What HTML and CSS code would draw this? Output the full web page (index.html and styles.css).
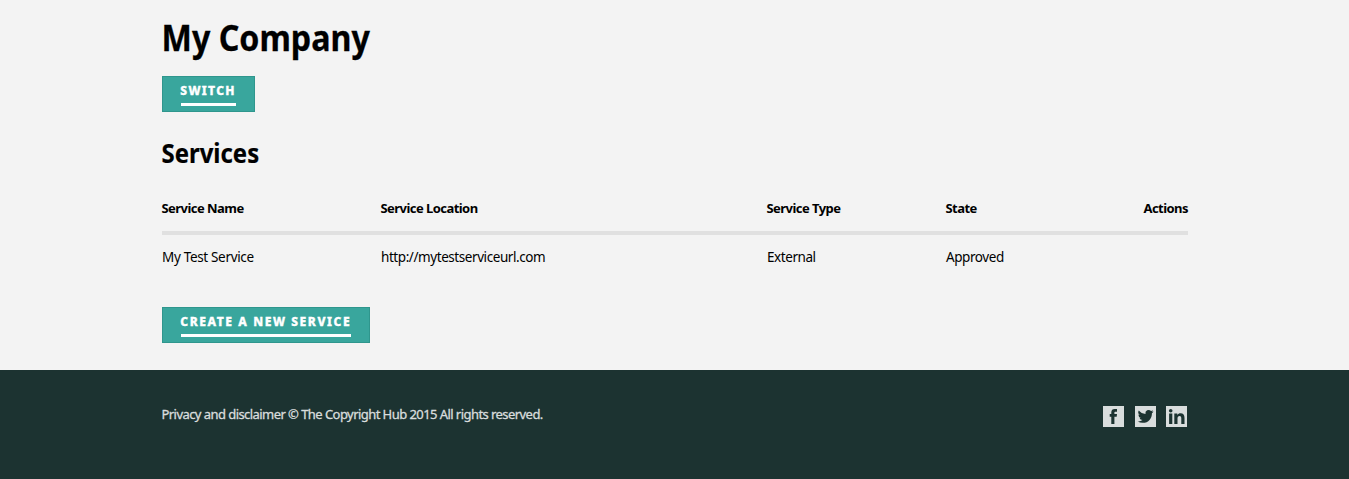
FILE: index.html
```html
<!DOCTYPE html>
<html lang="en">
<head>
<meta charset="utf-8">
<title>My Company</title>
<link rel="stylesheet" href="styles.css">
</head>
<body>
<main class="content">
  <div class="wrap">
    <h1 class="title">My Company</h1>
    <a class="button button-switch"><span class="button-label">Switch</span></a>
    <h2 class="subtitle">Services</h2>
    <div class="table">
      <div class="row head">
        <span>Service Name</span><span>Service Location</span><span>Service Type</span><span>State</span><span class="actions">Actions</span>
      </div>
      <div class="row body">
        <span class="name">My Test Service</span><span>http://mytestserviceurl.com</span><span>External</span><span>Approved</span><span></span>
      </div>
    </div>
    <a class="button button-create"><span class="button-label">Create a new service</span></a>
  </div>
</main>
<footer class="footer">
  <div class="wrap footer-row">
    <p class="legal">Privacy and disclaimer © The Copyright Hub 2015 All rights reserved.</p>
    <div class="social">
      <svg class="icon" viewBox="0 0 21 21"><rect width="21" height="21" fill="#d9dddd"/><path fill="#1c3331" d="M8.300 18V10.800H6.700V8.100h1.600V6.400C8.300 4.100 9.500 3 11.700 3H14v2.800h-1.400c-.9 0-1.200.3-1.200 1.100v1.200H14l-.3 2.700h-2.300V18z"/></svg>
      <svg class="icon" viewBox="0 0 21 21"><rect width="21" height="21" fill="#d9dddd"/><path fill="#1c3331" transform="translate(2.700 2.500) scale(.66)" d="M23.950 4.570a10 10 0 0 1-2.820.77 4.960 4.960 0 0 0 2.160-2.720c-.95.550-2 .950-3.130 1.180a4.920 4.920 0 0 0-8.380 4.480C7.690 8.090 4.070 6.130 1.640 3.160a4.920 4.920 0 0 0 1.520 6.570 4.900 4.900 0 0 1-2.230-.61v.06a4.920 4.920 0 0 0 3.950 4.830 5 5 0 0 1-2.210.08 4.940 4.940 0 0 0 4.600 3.420A9.870 9.870 0 0 1 0 19.540a14 14 0 0 0 7.550 2.210c9.050 0 14-7.500 14-13.980l-.02-.630a9.940 9.940 0 0 0 2.420-2.570z"/></svg>
      <svg class="icon" viewBox="0 0 21 21"><rect width="21" height="21" fill="#d9dddd"/><circle cx="4.700" cy="4.700" r="1.800" fill="#1c3331"/><path fill="#1c3331" d="M3.100 7.500h3.200V18H3.100zM8.300 7.500h3v1.400c.7-1.100 1.800-1.700 3.200-1.700 2.900 0 4 1.700 4 4.700V18h-3.200v-5.500c0-1.700-.4-2.600-1.700-2.600-1.500 0-2.100 1-2.100 2.600V18H8.300z"/></svg>
    </div>
  </div>
</footer>
</body>
</html>
```
FILE: styles.css
```css
* { box-sizing: border-box; }
body {
  margin: 0;
  background: #f3f3f3;
  color: #000;
  font: 13.5px/20px "Noto Sans", sans-serif;
}
.wrap { width: 1026px; margin-left: 162px; }
.content { height: 370px; overflow: hidden; }
.title,
.subtitle {
  width: fit-content;
  text-indent: -.5px;
  transform: scaleX(.92);
  transform-origin: left;
}
.title {
  margin: 16px 0;
  font-size: 35px;
  line-height: 44px;
  -webkit-text-stroke: .3px;
}
.button {
  display: block;
  height: 36px;
  padding: 4px 18px 0;
  border: 1px solid #2f968d;
  background: #39a69d;
  color: #fff;
}
.button-label {
  display: block;
  height: 25px;
  border-bottom: 3px solid #fff;
  font-size: 12px;
  font-weight: 800;
  letter-spacing: 1.5px;
  line-height: 20px;
  text-indent: -.7px;
  text-transform: uppercase;
  white-space: nowrap;
  -webkit-text-stroke: .35px;
}
.button-switch { width: 93px; }
.button-switch .button-label { letter-spacing: 1.35px; }
.button-create { width: 208px; }
.button-create .button-label { letter-spacing: 1.6px; }
.subtitle {
  margin: 23px 0 0;
  font-size: 26px;
  line-height: 36px;
  -webkit-text-stroke: .2px;
}
.table { padding-top: 27px; }
.row {
  display: grid;
  grid-template-columns: 219px 386px 179px 100px 1fr;
  white-space: nowrap;
  letter-spacing: -.43px;
}
.head {
  height: 37px;
  border-bottom: 4px solid #e0e0e0;
  font-size: 13px;
  font-weight: 700;
  letter-spacing: -.55px;
  text-indent: -.5px;
}
.body { height: 72px; padding-top: 12px; }
.name { letter-spacing: -.33px; }
.actions { text-align: right; }
.footer { height: 109px; background: #1c3331; color: #d9dddd; }
.footer-row { display: flex; justify-content: space-between; padding-top: 36px; }
.legal {
  margin: -2px 0 0;
  font-size: 13px;
  letter-spacing: -.56px;
  text-indent: -.5px;
  white-space: nowrap;
  -webkit-text-stroke: .3px;
}
.social { display: flex; gap: 10.5px; margin-right: 1px; }
.icon { width: 21px; height: 21px; }
```
